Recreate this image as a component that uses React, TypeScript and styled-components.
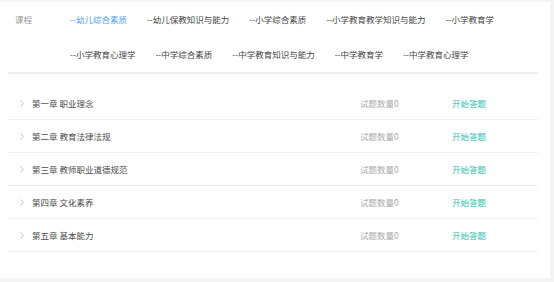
import styled, { createGlobalStyle } from 'styled-components'

const GlobalStyle = createGlobalStyle`
  html, body {
    margin: 0;
    padding: 0;
    background: #f4f4f4;
    font-family: "Noto Sans CJK SC", "Noto Sans", sans-serif;
  }
`

const subjects = [
  '--幼儿综合素质',
  '--幼儿保教知识与能力',
  '--小学综合素质',
  '--小学教育教学知识与能力',
  '--小学教育学',
  '--小学教育心理学',
  '--中学综合素质',
  '--中学教育知识与能力',
  '--中学教育学',
  '--中学教育心理学',
]

const chapters = [
  '第一章 职业理念',
  '第二章 教育法律法规',
  '第三章 教师职业道德规范',
  '第四章 文化素养',
  '第五章 基本能力',
]

const Card = styled.div`
  margin: 2px 4px 0 0;
  height: 276px;
  background: #fff;
  padding: 0 12px 0 8px;
  box-sizing: border-box;
`

const FilterBar = styled.div`
  display: flex;
  align-items: flex-start;
  border-bottom: 2px solid #efefef;
`

const FilterLabel = styled.span`
  flex: 0 0 62px;
  padding-left: 7px;
  box-sizing: border-box;
  line-height: 35px;
  font-size: 8.5px;
  color: #999;
`

const SubjectList = styled.div`
  display: flex;
  flex-wrap: wrap;
  column-gap: 20px;
  flex: 1;
`

const Subject = styled.span<{ $active?: boolean }>`
  line-height: 35px;
  font-size: 8.5px;
  color: ${(p) => (p.$active ? '#4d9ff3' : '#444')};
  cursor: pointer;
`

const ChapterList = styled.div`
  padding-top: 13px;
`

const ChapterRow = styled.div`
  display: grid;
  grid-template-columns: 24px 1fr 92px 86px;
  align-items: center;
  height: 33px;
  box-sizing: border-box;
  border-bottom: 1px solid #f0f0f0;
  font-size: 8.5px;
`

const Arrow = styled.span`
  display: flex;
  justify-content: flex-end;
  padding-right: 8px;
`

const Title = styled.span`
  color: #4a4a4a;
`

const Count = styled.span`
  color: #aaa;
`

const StartLink = styled.span`
  color: #2ebfb0;
  cursor: pointer;
`

const Chevron = () => (
  <svg width="4" height="7" viewBox="0 0 4 7">
    <polyline points="0.5,0.5 3.3,3.5 0.5,6.5" fill="none" stroke="#bbb" strokeWidth="0.9" />
  </svg>
)

export default function App() {
  return (
    <>
      <GlobalStyle />
      <Card>
        <FilterBar>
          <FilterLabel>课程</FilterLabel>
          <SubjectList>
            {subjects.map((s, i) => (
              <Subject key={s} $active={i === 0}>
                {s}
              </Subject>
            ))}
          </SubjectList>
        </FilterBar>
        <ChapterList>
          {chapters.map((c) => (
            <ChapterRow key={c}>
              <Arrow>
                <Chevron />
              </Arrow>
              <Title>{c}</Title>
              <Count>试题数量0</Count>
              <StartLink>开始答题</StartLink>
            </ChapterRow>
          ))}
        </ChapterList>
      </Card>
    </>
  )
}
